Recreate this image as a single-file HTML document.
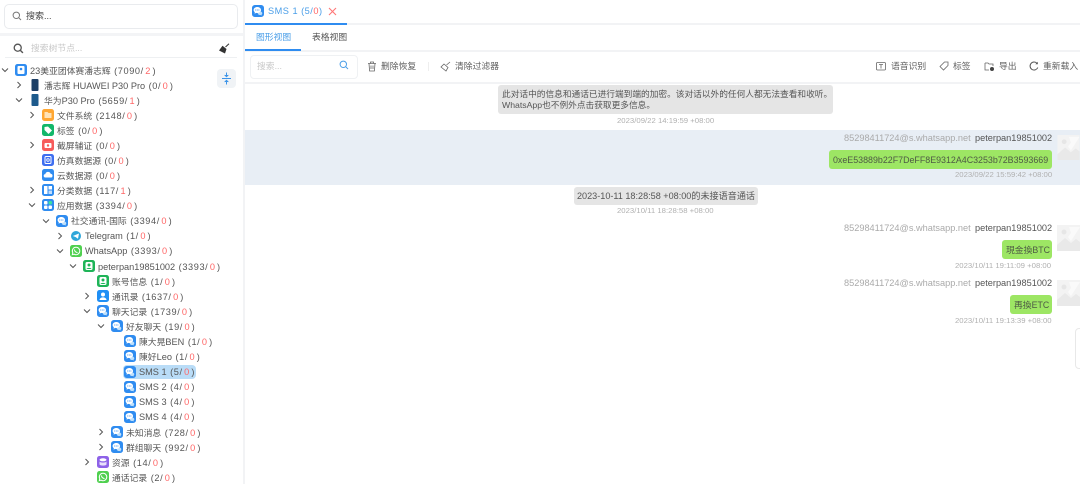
<!DOCTYPE html>
<html lang="zh"><head><meta charset="utf-8"><title>SMS 1</title>
<style>
html,body{margin:0;padding:0;background:#fff}
#p{position:relative;width:1080px;height:484px;overflow:hidden;background:#fff;font:8.8px/12px "Liberation Sans","Noto Sans CJK SC",sans-serif;color:#555;filter:blur(.3px)}
#p div,#p svg{position:absolute}
.t{white-space:nowrap}
.r{height:15px;left:0;width:230px}
.r svg.ar{left:1px;top:3px;width:8px;height:8px}
.r svg.ic{left:15px;top:1px;width:12px;height:12px}
.r .t{position:absolute;left:30px;top:1.5px;color:#555}
.t i{font-style:normal;font-size:9.2px}
b{font-weight:normal;color:#f66;margin:0 1.5px}
.c{margin-left:3.5px;font-size:9.2px;letter-spacing:.6px}
.time{color:#b0b0b0;font-size:7.75px}
.who{color:#aaa;font-size:9.2px}
.me{color:#555;font-size:9.2px}
.bub{background:#9de664;border-radius:3px}
.sys{background:#e5e5e5;border-radius:3px}
.av{background:#f2f2f2}
.tb{color:#5f5f5f}
</style></head><body>
<svg width="0" height="0" style="position:absolute">
<defs>
<symbol id="d" viewBox="0 0 8 8"><path d="M1 2.500 4 5.500 7 2.500" fill="none" stroke="#555" stroke-width="1"/></symbol>
<symbol id="rt" viewBox="0 0 8 8"><path d="M2.500 1 5.500 4 2.500 7" fill="none" stroke="#555" stroke-width="1"/></symbol>
<symbol id="chat" viewBox="0 0 12 12"><rect width="12" height="12" rx="2.800" fill="#2f8cf0"/><path d="M8 6.500c1.300 0 2.300.8 2.300 1.800 0 .5-.3 1-.7 1.300l.1.900-1-.5c-1.500.3-3-.5-3-1.700" fill="#bfe0fb"/><path d="M5.300 2C3.200 2 1.600 3.300 1.600 5c0 .9.500 1.700 1.200 2.200l-.2 1.500 1.500-.8c2.700.6 4.900-.9 4.900-2.900C9 3.300 7.400 2 5.300 2z" fill="#fff"/><circle cx="3.700" cy="5" r=".55" fill="#2f8cf0"/><circle cx="5.300" cy="5" r=".55" fill="#2f8cf0"/><circle cx="6.900" cy="5" r=".55" fill="#2f8cf0"/></symbol>
<symbol id="wa" viewBox="0 0 12 12"><rect width="12" height="12" rx="2.500" fill="#4fd04f"/><path d="M6 2.300a3.700 3.700 0 0 0-3.200 5.500L2.300 9.700l1.900-.5A3.700 3.700 0 1 0 6 2.300z" fill="none" stroke="#fff" stroke-width="1"/><path d="M4.500 4.500c0 1.700 1.300 3 3 3" fill="none" stroke="#fff" stroke-width="1"/></symbol>
<symbol id="acc" viewBox="0 0 12 12"><rect width="12" height="12" rx="2.500" fill="#1fb458"/><rect x="2.500" y="2" width="7" height="8" rx="1.500" fill="#fff"/><circle cx="6" cy="5" r="1.500" fill="#1fb458"/><path d="M3.500 9c.4-1.500 4.600-1.500 5 0" fill="#1fb458"/></symbol>
<symbol id="img" viewBox="0 0 23 26"><rect width="23" height="26" fill="#f3f3f3"/><circle cx="7" cy="7" r="2.500" fill="#e6e6e6"/><path d="M12 2 14 8 11 12 14 16 23 2z" fill="#fafafa"/><path d="M0 20 8 13 14 18 19 14 23 17V26H0z" fill="#e9e9e9"/></symbol>
</defs></svg>
<div id="p">
<!-- left panel -->
<div style="left:243px;top:0;width:2px;height:484px;background:#f2f3f5"></div>
<div style="left:4px;top:4px;width:232px;height:23px;border:1px solid #e9ebee;border-radius:5px"></div>
<svg style="left:12px;top:11px" width="10" height="10" viewBox="0 0 10 10"><circle cx="4.300" cy="4.300" r="3.200" fill="none" stroke="#777" stroke-width="1"/><path d="M6.700 6.700 9 9" stroke="#777" stroke-width="1"/></svg>
<div class="t" style="left:26px;top:10px;color:#444;font-size:9px">搜索...</div>
<div style="left:0;top:33px;width:243px;height:3px;background:#f3f4f6"></div>
<svg style="left:13px;top:43px" width="11" height="11" viewBox="0 0 10 10"><circle cx="4.300" cy="4.300" r="3.200" fill="none" stroke="#555" stroke-width="1.200"/><path d="M6.700 6.700 9 9" stroke="#555" stroke-width="1.300"/></svg>
<div class="t" style="left:31px;top:42px;color:#c8c8c8">搜索树节点...</div>
<svg style="left:218px;top:43px" width="12" height="12" viewBox="0 0 12 12"><path d="M7.500 4 11 .8" stroke="#333" stroke-width="1"/><path d="M4.500 2.800 8.500 6 7 10.500 1 7.500z" fill="#333"/></svg>
<div style="left:5px;top:57px;width:232px;height:1px;background:#eef0f2"></div>
<div style="left:217px;top:69px;width:19px;height:19px;background:#f0f3f6;border-radius:4px"></div>
<svg style="left:220px;top:72px" width="13" height="13" viewBox="0 0 13 13"><path d="M2 6.500h9" stroke="#3d94e8" stroke-width="1"/><path d="M6.500 .5v4M6.500 8.500v4" stroke="#3d94e8" stroke-width="1"/><path d="M4.500 3 6.500 5 8.500 3M4.500 10 6.500 8 8.500 10" fill="#3d94e8" stroke="#3d94e8" stroke-width=".6"/></svg>

<div class="r" style="top:63px"><svg class="ar"><use href="#d"/></svg><svg class="ic" viewBox="0 0 12 12"><rect width="12" height="12" rx="2.500" fill="#2f8cf0"/><rect x="2.500" y="2" width="7" height="8" rx="1" fill="#fff"/><circle cx="6" cy="5" r="1.300" fill="#2f8cf0"/></svg><span class="t"><i>23</i>美亚团体赛潘志辉<span class="c">(7090/<b>2</b>)</span></span></div>
<div class="r" style="top:78px;left:14px"><svg class="ar"><use href="#rt"/></svg><svg class="ic" viewBox="0 0 12 12"><rect x="2.500" width="7" height="12" rx="1" fill="#1d3f66"/></svg><span class="t">潘志辉<i> HUAWEI P30 Pro</i><span class="c">(0/<b>0</b>)</span></span></div>
<div class="r" style="top:93px;left:14px"><svg class="ar"><use href="#d"/></svg><svg class="ic" viewBox="0 0 12 12"><rect x="2.500" width="7" height="12" rx="1" fill="#1d5a8c"/></svg><span class="t">华为<i>P30 Pro</i><span class="c">(5659/<b>1</b>)</span></span></div>
<div class="r" style="top:108px;left:27px"><svg class="ar"><use href="#rt"/></svg><svg class="ic" viewBox="0 0 12 12"><rect width="12" height="12" rx="2.500" fill="#ffa733"/><path d="M2.500 3h3l1 1h3v5h-7z" fill="#ffe3b8"/></svg><span class="t">文件系统<span class="c">(2148/<b>0</b>)</span></span></div>
<div class="r" style="top:123px;left:27px"><svg class="ic" viewBox="0 0 12 12"><rect width="12" height="12" rx="2.500" fill="#12b76a"/><path d="M2.500 3v3l4 4 3.500-3.500-4-4z" fill="#fff"/></svg><span class="t">标签<span class="c">(0/<b>0</b>)</span></span></div>
<div class="r" style="top:138px;left:27px"><svg class="ar"><use href="#rt"/></svg><svg class="ic" viewBox="0 0 12 12"><rect width="12" height="12" rx="2.500" fill="#f75c5c"/><rect x="2.500" y="4" width="7" height="5" rx="1" fill="#fff"/><circle cx="6" cy="6.500" r="1.200" fill="#f75c5c"/></svg><span class="t">截屏辅证<span class="c">(0/<b>0</b>)</span></span></div>
<div class="r" style="top:153px;left:27px"><svg class="ic" viewBox="0 0 12 12"><rect width="12" height="12" rx="2.500" fill="#3f6ff0"/><rect x="3" y="2.500" width="6" height="7" rx="1" fill="none" stroke="#fff"/><circle cx="6" cy="6" r="1.300" fill="none" stroke="#fff" stroke-width=".8"/></svg><span class="t">仿真数据源<span class="c">(0/<b>0</b>)</span></span></div>
<div class="r" style="top:168px;left:27px"><svg class="ic" viewBox="0 0 12 12"><rect width="12" height="12" rx="2.500" fill="#2f8cf0"/><path d="M3.500 8.500a1.700 1.700 0 0 1-.2-3.400 2.800 2.800 0 0 1 5.400-.2 1.800 1.800 0 0 1 0 3.600z" fill="#fff"/></svg><span class="t">云数据源<span class="c">(0/<b>0</b>)</span></span></div>
<div class="r" style="top:183px;left:27px"><svg class="ar"><use href="#rt"/></svg><svg class="ic" viewBox="0 0 12 12"><rect width="12" height="12" rx="2.500" fill="#2f8cf0"/><rect x="2" y="2" width="3.500" height="8" fill="#fff"/><rect x="6.500" y="2" width="3.500" height="3.500" fill="#fff"/><rect x="6.500" y="6.500" width="3.500" height="3.500" fill="#fff" opacity=".7"/></svg><span class="t">分类数据<span class="c">(117/<b>1</b>)</span></span></div>
<div class="r" style="top:198px;left:27px"><svg class="ar"><use href="#d"/></svg><svg class="ic" viewBox="0 0 12 12"><rect width="12" height="12" rx="2.500" fill="#2f8cf0"/><rect x="2" y="2" width="3.500" height="3.500" rx="1" fill="#fff"/><circle cx="8.300" cy="3.700" r="1.800" fill="#3fe0a0"/><rect x="2" y="6.500" width="3.500" height="3.500" rx="1" fill="#fff"/><rect x="6.500" y="6.500" width="3.500" height="3.500" rx="1" fill="#fff"/></svg><span class="t">应用数据<span class="c">(3394/<b>0</b>)</span></span></div>
<div class="r" style="top:213.500px;left:41px"><svg class="ar"><use href="#d"/></svg><svg class="ic"><use href="#chat"/></svg><span class="t">社交通讯-国际<span class="c">(3394/<b>0</b>)</span></span></div>
<div class="r" style="top:228.500px;left:55px"><svg class="ar"><use href="#rt"/></svg><svg class="ic" viewBox="0 0 12 12"><circle cx="6" cy="6" r="5" fill="#2ea6d9"/><path d="M2.800 6 9 3.500 8 8.800 5.500 7z" fill="#fff"/></svg><span class="t"><i>Telegram</i><span class="c">(1/<b>0</b>)</span></span></div>
<div class="r" style="top:243.500px;left:55px"><svg class="ar"><use href="#d"/></svg><svg class="ic"><use href="#wa"/></svg><span class="t"><i>WhatsApp</i><span class="c">(3393/<b>0</b>)</span></span></div>
<div class="r" style="top:259px;left:68px"><svg class="ar"><use href="#d"/></svg><svg class="ic"><use href="#acc"/></svg><span class="t"><i>peterpan19851002</i><span class="c">(3393/<b>0</b>)</span></span></div>
<div class="r" style="top:274px;left:82px"><svg class="ic"><use href="#acc"/></svg><span class="t">账号信息<span class="c">(1/<b>0</b>)</span></span></div>
<div class="r" style="top:289px;left:82px"><svg class="ar"><use href="#rt"/></svg><svg class="ic" viewBox="0 0 12 12"><rect width="12" height="12" rx="2.500" fill="#1f8ff5"/><circle cx="6" cy="4.500" r="2" fill="#fff"/><path d="M2.500 10c.3-3.500 6.700-3.500 7 0z" fill="#fff"/></svg><span class="t">通讯录<span class="c">(1637/<b>0</b>)</span></span></div>
<div class="r" style="top:304px;left:82px"><svg class="ar"><use href="#d"/></svg><svg class="ic"><use href="#chat"/></svg><span class="t">聊天记录<span class="c">(1739/<b>0</b>)</span></span></div>
<div class="r" style="top:319px;left:96px"><svg class="ar"><use href="#d"/></svg><svg class="ic"><use href="#chat"/></svg><span class="t">好友聊天<span class="c">(19/<b>0</b>)</span></span></div>
<div class="r" style="top:334px;left:109px"><svg class="ic"><use href="#chat"/></svg><span class="t">陳大晃<i>BEN</i><span class="c">(1/<b>0</b>)</span></span></div>
<div class="r" style="top:349px;left:109px"><svg class="ic"><use href="#chat"/></svg><span class="t">陳好<i>Leo</i><span class="c">(1/<b>0</b>)</span></span></div>
<div style="left:123px;top:365px;width:73px;height:14px;background:#b9dcf7;border-radius:4px"></div>
<div class="r" style="top:364.500px;left:109px"><svg class="ic"><use href="#chat"/></svg><span class="t"><i>SMS 1</i><span class="c">(5/<b>0</b>)</span></span></div>
<div class="r" style="top:379.500px;left:109px"><svg class="ic"><use href="#chat"/></svg><span class="t"><i>SMS 2</i><span class="c">(4/<b>0</b>)</span></span></div>
<div class="r" style="top:394.500px;left:109px"><svg class="ic"><use href="#chat"/></svg><span class="t"><i>SMS 3</i><span class="c">(4/<b>0</b>)</span></span></div>
<div class="r" style="top:409.500px;left:109px"><svg class="ic"><use href="#chat"/></svg><span class="t"><i>SMS 4</i><span class="c">(4/<b>0</b>)</span></span></div>
<div class="r" style="top:425px;left:96px"><svg class="ar"><use href="#rt"/></svg><svg class="ic"><use href="#chat"/></svg><span class="t">未知消息<span class="c">(728/<b>0</b>)</span></span></div>
<div class="r" style="top:440px;left:96px"><svg class="ar"><use href="#rt"/></svg><svg class="ic"><use href="#chat"/></svg><span class="t">群组聊天<span class="c">(992/<b>0</b>)</span></span></div>
<div class="r" style="top:455px;left:82px"><svg class="ar"><use href="#rt"/></svg><svg class="ic" viewBox="0 0 12 12"><rect width="12" height="12" rx="2.500" fill="#8e62e8"/><ellipse cx="6" cy="3.800" rx="3.500" ry="1.500" fill="#fff"/><path d="M2.500 5.500c1 1.500 6 1.500 7 0v3c-1 1.500-6 1.500-7 0z" fill="#fff" opacity=".8"/></svg><span class="t">资源<span class="c">(14/<b>0</b>)</span></span></div>
<div class="r" style="top:470px;left:82px"><svg class="ic"><use href="#wa"/></svg><span class="t">通话记录<span class="c">(2/<b>0</b>)</span></span></div>

<!-- tabs -->
<div style="left:245px;top:23px;width:835px;height:2px;background:#f2f3f5"></div>
<div style="left:245px;top:23px;width:102px;height:1.500px;background:#2f8cf0"></div>
<svg style="left:252px;top:5px" width="12" height="12"><use href="#chat"/></svg>
<div class="t" style="left:268px;top:5px;color:#4a9ee8;font-size:9.200px;letter-spacing:.5px">SMS 1 (5/<b style="margin:0">0</b>)</div>
<svg style="left:328px;top:7px" width="9" height="9" viewBox="0 0 9 9"><path d="M1 1 8 8M8 1 1 8" stroke="#f77" stroke-width="1.100"/></svg>
<div style="left:245px;top:50px;width:835px;height:1.500px;background:#f2f3f5"></div>
<div style="left:245px;top:49px;width:56px;height:1.500px;background:#2f8cf0"></div>
<div class="t" style="left:256px;top:31px;color:#4a9ee8">图形视图</div>
<div class="t" style="left:312px;top:31px;color:#555">表格视图</div>

<!-- toolbar -->
<div style="left:250px;top:55px;width:106px;height:22px;border:1px solid #eff1f3;border-radius:4px"></div>
<div class="t" style="left:257px;top:60px;color:#c8c8c8">搜索...</div>
<svg style="left:339px;top:60px" width="10" height="10" viewBox="0 0 10 10"><circle cx="4.300" cy="4.300" r="3.200" fill="none" stroke="#4a9ee8"/><path d="M6.700 6.700 9 9" stroke="#4a9ee8"/></svg>
<svg style="left:367px;top:61px" width="10" height="11" viewBox="0 0 10 11"><path d="M1 2.500h8M3.500 2.500V1h3v1.500M2 2.500l.6 7.500h4.800L8 2.500M4 4.500v3.500M6 4.500v3.500" fill="none" stroke="#666" stroke-width=".8"/></svg>
<div class="t tb" style="left:381px;top:60px">删除恢复</div>
<div style="left:428px;top:62px;width:1px;height:9px;background:#eee"></div>
<svg style="left:440px;top:61px" width="11" height="11" viewBox="0 0 11 11"><path d="M6.500 4 10 1" stroke="#666" stroke-width=".8"/><path d="M4 3 8 6.500 6 10 1 6z" fill="none" stroke="#666" stroke-width=".8"/></svg>
<div class="t tb" style="left:455px;top:60px">清除过滤器</div>
<svg style="left:876px;top:62px" width="10" height="9" viewBox="0 0 10 9"><rect x=".5" y=".5" width="9" height="7.500" rx="1" fill="none" stroke="#666" stroke-width=".8"/><path d="M3 2.500h4M5 2.500v4" stroke="#666" stroke-width=".8"/></svg>
<div class="t tb" style="left:891px;top:60px">语音识别</div>
<svg style="left:939px;top:61px" width="10" height="10" viewBox="0 0 10 10"><path d="M1 5.500 5.500 1H9v3.500L4.500 9z" fill="none" stroke="#666" stroke-width=".8"/></svg>
<div class="t tb" style="left:953px;top:60px">标签</div>
<svg style="left:984px;top:61px" width="11" height="11" viewBox="0 0 11 11"><path d="M1 2h3l1 1h4v2M5 9H1V2" fill="none" stroke="#666" stroke-width=".8"/><circle cx="8" cy="8" r="2" fill="#444"/></svg>
<div class="t tb" style="left:999px;top:60px">导出</div>
<svg style="left:1029px;top:61px" width="10" height="10" viewBox="0 0 10 10"><path d="M8.800 6.500A4 4 0 1 1 8 2.300" fill="none" stroke="#555"/><path d="M8.800.8v2.500H6.300" fill="#555"/></svg>
<div class="t tb" style="left:1043px;top:60px">重新载入</div>
<div style="left:245px;top:82px;width:835px;height:1.500px;background:#f2f3f5"></div>

<!-- messages -->
<div class="sys" style="left:498px;top:85px;width:335px;height:29px"></div>
<div class="t" style="left:502px;top:88.500px;color:#555;line-height:11px;font-size:8.700px">此对话中的信息和通话已进行端到端的加密。该对话以外的任何人都无法查看和收听。<br>WhatsApp也不例外点击获取更多信息。</div>
<div class="t time" style="left:617px;top:115px">2023/09/22 14:19:59 +08:00</div>

<div style="left:245px;top:130px;width:835px;height:55px;background:#e8eef5"></div>
<div class="t who" style="left:844px;top:132px">85298411724@s.whatsapp.net</div>
<div class="t me" style="left:975px;top:132px">peterpan19851002</div>
<svg style="left:1057px;top:135px" width="23" height="25"><use href="#img"/></svg>
<div class="bub" style="left:829px;top:150px;width:223px;height:19px"></div>
<div class="t" style="left:833px;top:153.500px;color:#4e5a45;font-size:8.900px">0xeE53889b22F7DeFF8E9312A4C3253b72B3593669</div>
<div class="t time" style="left:955px;top:169px">2023/09/22 15:59:42 +08:00</div>

<div class="sys" style="left:574px;top:187px;width:184px;height:18px"></div>
<div class="t" style="left:577px;top:190px;color:#555;font-size:9.100px">2023-10-11 18:28:58 +08:00的未接语音通话</div>
<div class="t time" style="left:617px;top:205px">2023/10/11 18:28:58 +08:00</div>

<div class="t who" style="left:844px;top:222px">85298411724@s.whatsapp.net</div>
<div class="t me" style="left:975px;top:222px">peterpan19851002</div>
<svg style="left:1057px;top:225px" width="23" height="26"><use href="#img"/></svg>
<div class="bub" style="left:1002px;top:240px;width:50px;height:19px"></div>
<div class="t" style="left:1006px;top:243.500px;color:#4e5a45">現金換BTC</div>
<div class="t time" style="left:955px;top:260px">2023/10/11 19:11:09 +08:00</div>

<div class="t who" style="left:844px;top:277px">85298411724@s.whatsapp.net</div>
<div class="t me" style="left:975px;top:277px">peterpan19851002</div>
<svg style="left:1057px;top:280px" width="23" height="26"><use href="#img"/></svg>
<div class="bub" style="left:1010px;top:295px;width:42px;height:19px"></div>
<div class="t" style="left:1014px;top:298.500px;color:#4e5a45">再換ETC</div>
<div class="t time" style="left:955px;top:315px">2023/10/11 19:13:39 +08:00</div>

<div style="left:1075px;top:328px;width:8px;height:39px;border:1px solid #e8e8e8;border-radius:4px;background:#fff"></div>
</div>
</body></html>
